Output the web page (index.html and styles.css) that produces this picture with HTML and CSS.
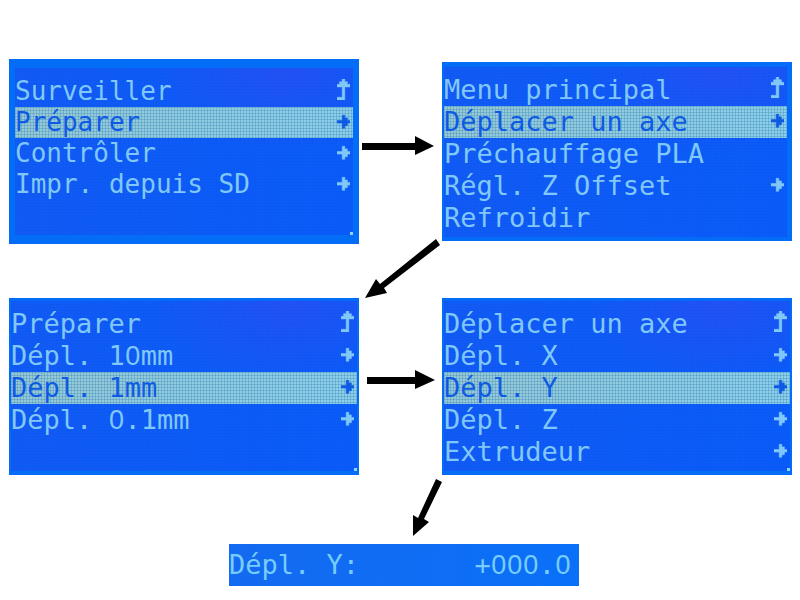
FILE: index.html
```html
<!DOCTYPE html>
<html lang="fr">
<head>
<meta charset="utf-8">
<meta name="viewport" content="width=device-width, initial-scale=1">
<title>Déplacer un axe</title>
<link rel="stylesheet" href="styles.css">
</head>
<body>
<svg class="defs" aria-hidden="true">
  <symbol id="back" viewBox="0 0 5 8"><path d="M2 0h1v1h1v1h1v1H3v5H0V7h2V3H0V2h1V1h1z"/></symbol>
  <symbol id="enter" viewBox="0 0 5 8"><path d="M2 2h1v1h1v1h1v1H4v1H3v1H2V5H0V4h2z"/></symbol>
</svg>
<main class="flow">
  <ul class="screen screen-main dot">
    <li class="row"><span>Surveiller</span><svg class="icon"><use href="#back"/></svg></li>
    <li class="row selected"><span>Préparer</span><svg class="icon"><use href="#enter"/></svg></li>
    <li class="row"><span>Contrôler</span><svg class="icon"><use href="#enter"/></svg></li>
    <li class="row"><span>Impr. depuis SD</span><svg class="icon"><use href="#enter"/></svg></li>
    <li class="row"></li>
  </ul>

  <svg class="arrow" viewBox="0 0 83 54"><path d="M3 18h53v-7l19 10-19 9v-5H3z"/></svg>

  <ul class="screen screen-prepare">
    <li class="row"><span>Menu principal</span><svg class="icon"><use href="#back"/></svg></li>
    <li class="row selected"><span>Déplacer un axe</span><svg class="icon"><use href="#enter"/></svg></li>
    <li class="row"><span>Préchauffage PLA</span></li>
    <li class="row"><span>Régl. Z Offset</span><svg class="icon"><use href="#enter"/></svg></li>
    <li class="row"><span>Refroidir</span></li>
  </ul>

  <svg class="arrow arrow-between" viewBox="0 0 83 54"><path d="M77-5l4 6-56 43 3 5-22 5 11-19 4 5z"/></svg>

  <ul class="screen dot">
    <li class="row"><span>Préparer</span><svg class="icon"><use href="#back"/></svg></li>
    <li class="row"><span>Dépl. 1<b class="zero">0</b>mm</span><svg class="icon"><use href="#enter"/></svg></li>
    <li class="row selected"><span>Dépl. 1mm</span><svg class="icon"><use href="#enter"/></svg></li>
    <li class="row"><span>Dépl. <b class="zero">0</b>.1mm</span><svg class="icon"><use href="#enter"/></svg></li>
    <li class="row"></li>
  </ul>

  <svg class="arrow" viewBox="0 0 83 54"><path d="M8 17h48v-7l20 10-20 9v-5H8z"/></svg>

  <ul class="screen dot">
    <li class="row"><span>Déplacer un axe</span><svg class="icon"><use href="#back"/></svg></li>
    <li class="row"><span>Dépl. X</span><svg class="icon"><use href="#enter"/></svg></li>
    <li class="row selected"><span>Dépl. Y</span><svg class="icon"><use href="#enter"/></svg></li>
    <li class="row"><span>Dépl. Z</span><svg class="icon"><use href="#enter"/></svg></li>
    <li class="row"><span>Extrudeur</span><svg class="icon"><use href="#enter"/></svg></li>
  </ul>

  <svg class="arrow arrow-between arrow-down" viewBox="0 0 83 69"><path d="M77 4l6 3-18 37 5 3-16 14V40l5 3z"/></svg>

  <div class="result">
    <p class="value"><span>Dépl. Y:</span><span>+<b class="zero">0</b><b class="zero">0</b><b class="zero">0</b>.<b class="zero">0</b></span></p>
  </div>
</main>
</body>
</html>
```
FILE: styles.css
```css
* {
  box-sizing: border-box;
}

body {
  margin: 0;
  background: #fff;
  font-family: "DejaVu Sans Mono", "Liberation Mono", monospace;
  font-size: 27px;
  line-height: 32px;
}

.defs {
  position: absolute;
  width: 0;
  height: 0;
}

.flow {
  display: grid;
  grid-template-columns: 1fr 83px 1fr;
  grid-template-rows: auto 54px auto 69px auto;
  align-items: center;
  padding: 59px 8px 14px 9px;
}

.screen {
  position: relative;
  min-width: 0;
  margin: 0;
  padding: 7px 0 3px;
  list-style: none;
  color: #80c8f8;
  border: solid #036df8;
  border-width: 3px 2px 4px;
  background:
    repeating-linear-gradient(90deg, rgba(0, 60, 200, 0.07) 0 1px, transparent 1px 3px),
    repeating-linear-gradient(rgba(0, 60, 200, 0.07) 0 1px, transparent 1px 3px),
    radial-gradient(ellipse at 80% 0, #2451f5, transparent 35%),
    linear-gradient(100deg, #125bf5, #0a5cfa);
  background-origin: padding-box;
}

.screen-main {
  padding: 8px 0 4px;
  border-width: 9px 6px;
  font-size: 26px;
  line-height: 31px;
}

.screen-prepare {
  border-width: 5px 5px 4px 2px;
}

.dot::after {
  content: "";
  position: absolute;
  right: 0;
  bottom: 0;
  width: 3px;
  height: 3px;
  background: #8fd6f5;
}

.row {
  display: flex;
  justify-content: space-between;
  height: 1lh;
  white-space: pre;
}

.selected {
  color: #0e5ae4;
  background:
    repeating-linear-gradient(90deg, rgba(55, 135, 185, 0.35) 0 1px, transparent 1px 3px),
    repeating-linear-gradient(rgba(55, 135, 185, 0.35) 0 1px, transparent 1px 3px),
    linear-gradient(90deg, #97c8d4, #8dcfea);
}

.icon {
  flex: none;
  width: 13px;
  height: 21px;
  margin: 3px 3px 0 0;
  fill: currentColor;
  stroke: currentColor;
  stroke-width: 0.2px;
  overflow: visible;
}

.zero {
  display: inline-block;
  width: 16px;
  font-family: "Liberation Sans", sans-serif;
  font-weight: 400;
  text-align: center;
}

.arrow {
  display: block;
  width: 83px;
  height: 54px;
  overflow: visible;
}

.arrow-between {
  grid-column: 1 / -1;
  justify-self: center;
}

.arrow-down {
  height: 69px;
}

.result {
  grid-column: 1 / -1;
  padding-left: 7px;
}

.value {
  display: flex;
  justify-content: space-between;
  width: 350px;
  max-width: 100%;
  margin: 0 auto;
  padding: 5px 8px 5px 0;
  color: #76cdfb;
  background: linear-gradient(100deg, #146af0, #0a70f8);
  white-space: pre;
}
```
